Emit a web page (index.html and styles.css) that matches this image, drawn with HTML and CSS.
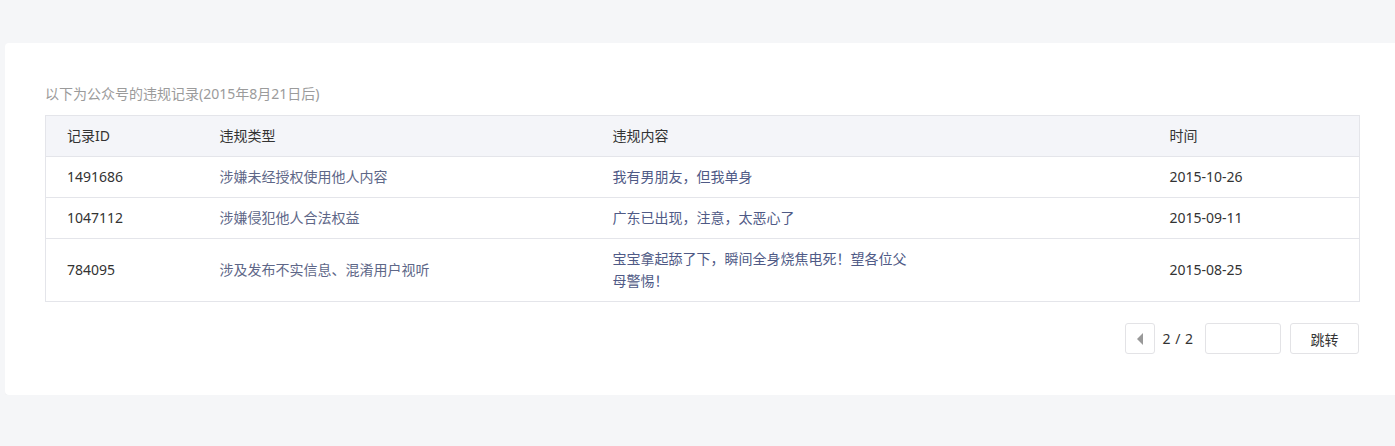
FILE: index.html
```html
<!DOCTYPE html>
<html lang="zh-CN">
<head>
<meta charset="utf-8">
<title>违规记录</title>
<link rel="stylesheet" href="styles.css">
</head>
<body>
<div class="card">
  <div class="inner">
    <p class="caption">以下为公众号的违规记录(2015年8月21日后)</p>
    <table class="records">
      <colgroup>
        <col class="c1"><col class="c2"><col class="c3"><col class="c4">
      </colgroup>
      <thead>
        <tr><th>记录ID</th><th>违规类型</th><th>违规内容</th><th>时间</th></tr>
      </thead>
      <tbody>
        <tr><td>1491686</td><td class="type">涉嫌未经授权使用他人内容</td><td class="content"><div class="wrap">我有男朋友，但我单身</div></td><td>2015-10-26</td></tr>
        <tr><td>1047112</td><td class="type">涉嫌侵犯他人合法权益</td><td class="content"><div class="wrap">广东已出现，注意，太恶心了</div></td><td>2015-09-11</td></tr>
        <tr><td>784095</td><td class="type">涉及发布不实信息、混淆用户视听</td><td class="content"><div class="wrap">宝宝拿起舔了下，瞬间全身烧焦电死！望各位父母警惕！</div></td><td>2015-08-25</td></tr>
      </tbody>
    </table>
    <div class="pager">
      <button class="prev" type="button" aria-label="上一页"><span class="tri"></span></button>
      <span class="pages">2 / 2</span>
      <input class="jump-input" type="text">
      <button class="jump" type="button">跳转</button>
    </div>
  </div>
</div>
</body>
</html>
```
FILE: styles.css
```css
html, body {
  margin: 0;
  padding: 0;
}
body {
  background: #f5f6f8;
  font-family: "Noto Sans", "Noto Sans CJK SC", sans-serif;
  font-size: 14px;
  color: #333;
  overflow: hidden;
}
.card {
  margin: 43px 0 0 5px;
  width: 1400px;
  background: #fff;
  border-radius: 4px;
  padding: 40px 0 41px 40px;
  box-sizing: border-box;
  box-shadow: 0 1px 1px rgba(0,0,0,0.03);
}
.inner {
  width: 1314px;
}
.caption {
  margin: 0 0 10px;
  line-height: 22px;
  color: #9b9b9b;
  font-size: 14px;
}
.records {
  width: 1314px;
  border-collapse: collapse;
  table-layout: fixed;
  border: 1px solid #e4e5ea;
}
.c1 { width: 153px; }
.c2 { width: 393px; }
.c3 { width: 557px; }
.c4 { width: 211px; }
.records th, .records td {
  text-align: left;
  font-weight: normal;
  padding: 9px 22px 9px 21px;
  line-height: 22px;
  vertical-align: middle;
  border-bottom: 1px solid #e4e5ea;
}
.records th {
  background: #f4f5f9;
  color: #333;
}
.records td {
  color: #333;
}
.records td.type {
  color: #5e6788;
}
.records td.content {
  color: #4f5a86;
}
.wrap {
  max-width: 300px;
}
.pager {
  margin-top: 21px;
  display: flex;
  justify-content: flex-end;
  align-items: center;
  height: 31px;
}
.prev {
  width: 30px;
  height: 31px;
  box-sizing: border-box;
  border: 1px solid #e3e3e6;
  border-radius: 3px;
  background: #fff;
  padding: 0;
  display: flex;
  align-items: center;
  justify-content: center;
}
.tri {
  width: 0;
  height: 0;
  border-top: 6px solid transparent;
  border-bottom: 6px solid transparent;
  border-right: 6px solid #999;
}
.pages {
  margin: 0 12px 0 7px;
  color: #333;
  font-size: 14px;
  line-height: 22px;
  word-spacing: 1px;
}
.jump-input {
  width: 76px;
  height: 31px;
  box-sizing: border-box;
  border: 1px solid #e3e3e6;
  border-radius: 3px;
  background: #fff;
  outline: none;
  padding: 0 8px;
  font: inherit;
}
.jump {
  margin-left: 9px;
  width: 69px;
  height: 31px;
  box-sizing: border-box;
  border: 1px solid #e3e3e6;
  border-radius: 3px;
  background: #fff;
  font-family: "Noto Sans", "Noto Sans CJK SC", sans-serif;
  font-size: 14px;
  color: #333;
  padding: 0;
}
```
